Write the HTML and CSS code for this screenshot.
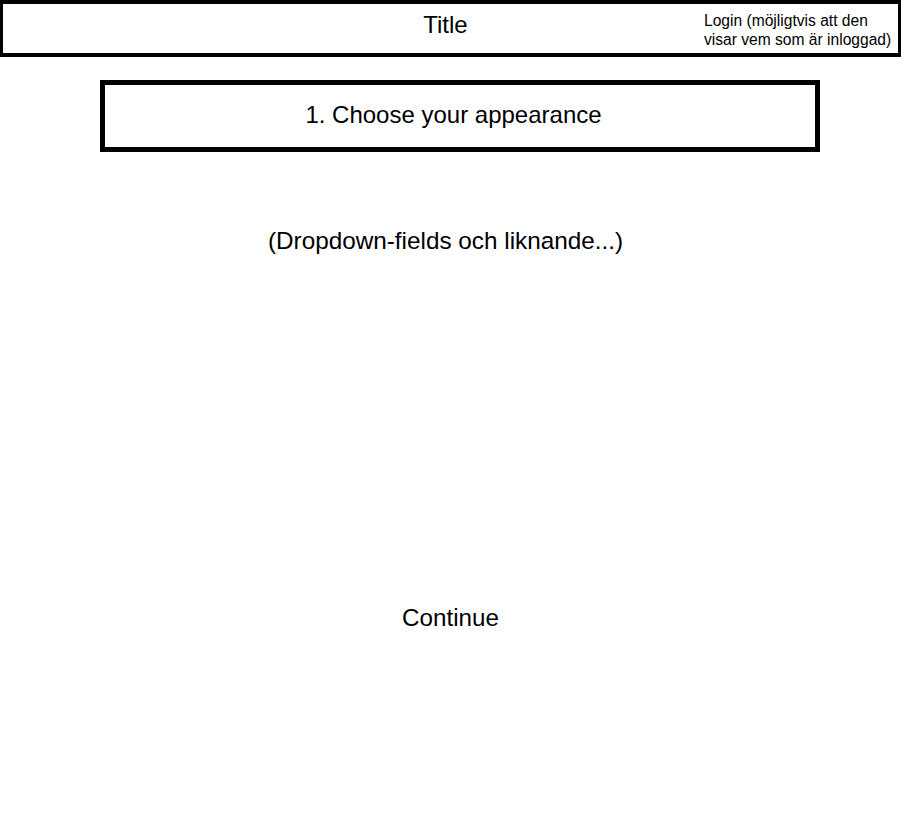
FILE: index.html
```html
<!DOCTYPE html>
<html>
<head>
<meta charset="utf-8">
<link rel="stylesheet" href="styles.css">
</head>
<body>
<header class="topbar">
  <div class="spacer"></div>
  <div class="title">Title</div>
  <div class="login">Login (möjligtvis att den<br>visar vem som är inloggad)</div>
</header>
<main class="content">
  <div class="step">1. Choose your appearance</div>
  <div class="fields">(Dropdown-fields och liknande...)</div>
  <div class="continue">Continue</div>
</main>
</body>
</html>
```
FILE: styles.css
```css
html, body {
  margin: 0;
  padding: 0;
  background: #fff;
  font-family: "Liberation Sans", Arial, sans-serif;
  color: #000;
}
.topbar {
  box-sizing: border-box;
  width: 901px;
  height: 57px;
  border-style: solid;
  border-color: #000;
  border-width: 4px 3px 4px 3px;
  display: grid;
  grid-template-columns: 1fr auto 1fr;
  align-items: start;
}
.title {
  font-size: 24px;
  line-height: 28px;
  padding-top: 7px;
  padding-right: 10px;
}
.login {
  justify-self: end;
  font-size: 15.6px;
  line-height: 19px;
  padding-top: 7px;
  padding-right: 6px;
  width: 188px;
  white-space: nowrap;
}
.content {
  display: flex;
  flex-direction: column;
  align-items: center;
}
.step {
  box-sizing: border-box;
  margin-top: 23px;
  margin-left: 18px;
  width: 720px;
  height: 72px;
  border: 5px solid #000;
  display: flex;
  align-items: center;
  justify-content: center;
  font-size: 24px;
  padding-right: 12px;
  padding-bottom: 2px;
}
.fields {
  margin-top: 75px;
  font-size: 24.3px;
  line-height: 28px;
  padding-right: 10px;
}
.continue {
  margin-top: 349px;
  font-size: 24.2px;
  line-height: 28px;
}
```
